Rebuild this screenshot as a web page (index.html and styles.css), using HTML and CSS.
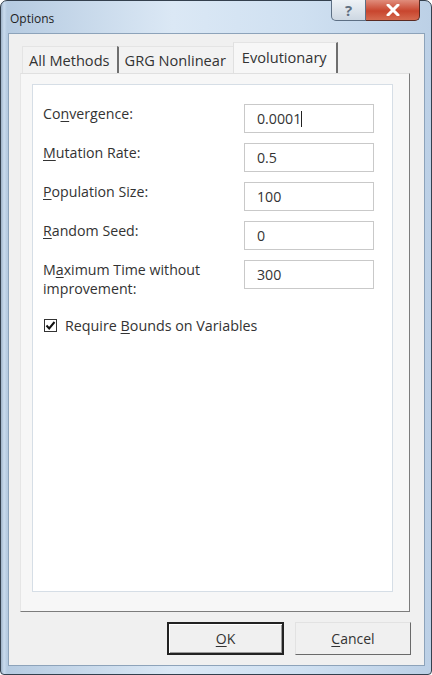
FILE: index.html
```html
<!DOCTYPE html>
<html>
<head>
    <title>Options</title>
    <link rel="stylesheet" href="styles.css">
</head>
<body>
    <div class="window">
        <div class="titlebar">
            <span class="title">Options</span>
            <div class="caption-buttons">
                <div class="cap-help">?</div>
                <div class="cap-close">
                    <svg width="14" height="12" viewBox="0 0 14 12"><path d="M2 1 L12 11 M12 1 L2 11" stroke="#fff" stroke-width="3" stroke-linecap="round"/></svg>
                </div>
            </div>
        </div>

        <div class="client">
            <div class="tabs">
                <div class="tab">All Methods</div>
                <div class="tab tab-sep">GRG Nonlinear</div>
                <div class="tab active">Evolutionary</div>
            </div>

            <div class="panel">
                <div class="page">
                    <div class="form-grid">
                        <label class="lbl">Co<u>n</u>vergence:</label>
                        <div class="field">0.0001<span class="caret"></span></div>

                        <label class="lbl"><u>M</u>utation Rate:</label>
                        <div class="field">0.5</div>

                        <label class="lbl"><u>P</u>opulation Size:</label>
                        <div class="field">100</div>

                        <label class="lbl"><u>R</u>andom Seed:</label>
                        <div class="field">0</div>

                        <label class="lbl">
                            <span class="line">M<u>a</u>ximum Time without</span>
                            <span class="line">improvement:</span>
                        </label>
                        <div class="field">300</div>
                    </div>

                    <div class="check-row">
                        <span class="checkbox">
                            <svg width="11" height="11" viewBox="0 0 11 11"><path d="M1.5 5.5 L4.2 8.5 L9.5 2" fill="none" stroke="#111" stroke-width="2"/></svg>
                        </span>
                        <span>Require <u>B</u>ounds on Variables</span>
                    </div>
                </div>
            </div>

            <div class="buttons">
                <div class="btn btn-default"><u>O</u>K</div>
                <div class="btn"><u>C</u>ancel</div>
            </div>
        </div>
    </div>
</body>
</html>
```

FILE: styles.css
```css
body { margin: 0; font-family: "Open Sans", "Noto Sans", sans-serif; font-size: 14px; color: #333; background: #fff; }
u { text-decoration-thickness: 1px; text-underline-offset: 2px; }

.window { box-sizing: border-box; width: 432px; height: 675px; border: 1px solid #34404e; border-radius: 7px 7px 4px 4px;
    background: linear-gradient(90deg, #9fb3c8 0px, #c9dbee 3px, #b6cbe1 6px, #dbe8f5 40%, #cfe0f1 70%, #bcd0e6 100%);
    display: flex; flex-direction: column; }

.titlebar { height: 32px; display: flex; align-items: flex-start; padding-left: 9px; flex-shrink: 0; }
.title { font-size: 12px; color: #1e1e1e; margin-top: 9px; }
.caption-buttons { margin-left: auto; margin-right: 11px; display: flex; margin-top: -1px; }
.cap-help { width: 35px; height: 21px; box-sizing: border-box; border: 1px solid #5d6f84; border-top: none; border-radius: 0 0 0 5px;
    background: linear-gradient(#eef2f6, #cdd7e2); color: #5f6f82; font-size: 15px; font-weight: bold; text-align: center; line-height: 20px; }
.cap-close { width: 54px; height: 21px; box-sizing: border-box; border: 1px solid #5a2a22; border-left: none; border-top: none; border-radius: 0 0 5px 0;
    background: linear-gradient(#e08d7c, #c8452e 55%, #d56a4f); display: flex; align-items: center; justify-content: center; }

.client { flex: 1; margin: 0 6px 8px 7px; background: #f0f0f0; border: 1px solid #8da3ba; display: flex; flex-direction: column; }

.tabs { height: 39px; display: flex; align-items: flex-end; padding-left: 13px; }
.tab { height: 27px; box-sizing: border-box; padding: 0 7px 0 6px; line-height: 26px; font-size: 14.6px; color: #333;
    background: #f2f2f2; border-top: 1px solid #e4e4e4; border-left: 1px solid #e4e4e4; }
.tab-sep { border-left: 2px solid #6f6f6f; }
.tab.active { height: 32px; line-height: 28px; padding: 0 9px 0 8px; margin-bottom: -1px; background: #f7f7f7;
    border-left: 1px solid #e0e0e0; border-right: 2px solid #6f6f6f; }

.panel { margin-left: 11px; width: 390px; height: 539px; box-sizing: border-box; background: #f7f7f7;
    border: 1px solid; border-color: #e0e0e0 #7c7c7c #7c7c7c #e6e6e6; padding: 10px 0 0 11px; }
.page { width: 361px; height: 508px; box-sizing: border-box; background: #fff; border: 1px solid #d6dee6; padding: 19px 18px 0 10px; }

.form-grid { display: grid; grid-template-columns: 1fr 130px; row-gap: 10px; }
.lbl { line-height: 19px; font-size: 14.2px; }
.line { display: block; }
.field { height: 29px; box-sizing: border-box; border: 1px solid #c9c9c9; padding-left: 12px; line-height: 27px; font-size: 14.2px; color: #333; }
.caret { display: inline-block; width: 1px; height: 16px; background: #222; vertical-align: -3px; }

.check-row { display: flex; align-items: center; margin-top: 18px; line-height: 19px; font-size: 14.3px; }
.checkbox { width: 13px; height: 13px; box-sizing: border-box; border: 1px solid #333; margin: 0 8px 0 1px; display: flex; align-items: center; justify-content: center; background: #fff; }

.buttons { display: flex; justify-content: flex-end; gap: 11px; padding: 10px 13px 0 0; }
.btn { width: 116px; height: 33px; box-sizing: border-box; text-align: center; line-height: 31px; font-size: 14px; color: #333;
    background: #f0f0f0; border: 1px solid; border-color: #e2e2e2 #6a6a6a #6a6a6a #e2e2e2; }
.btn-default { width: 117px; border: 2px solid #222; box-shadow: inset 1px 1px #fff, inset -1px -1px #9a9a9a; line-height: 29px; }
```
